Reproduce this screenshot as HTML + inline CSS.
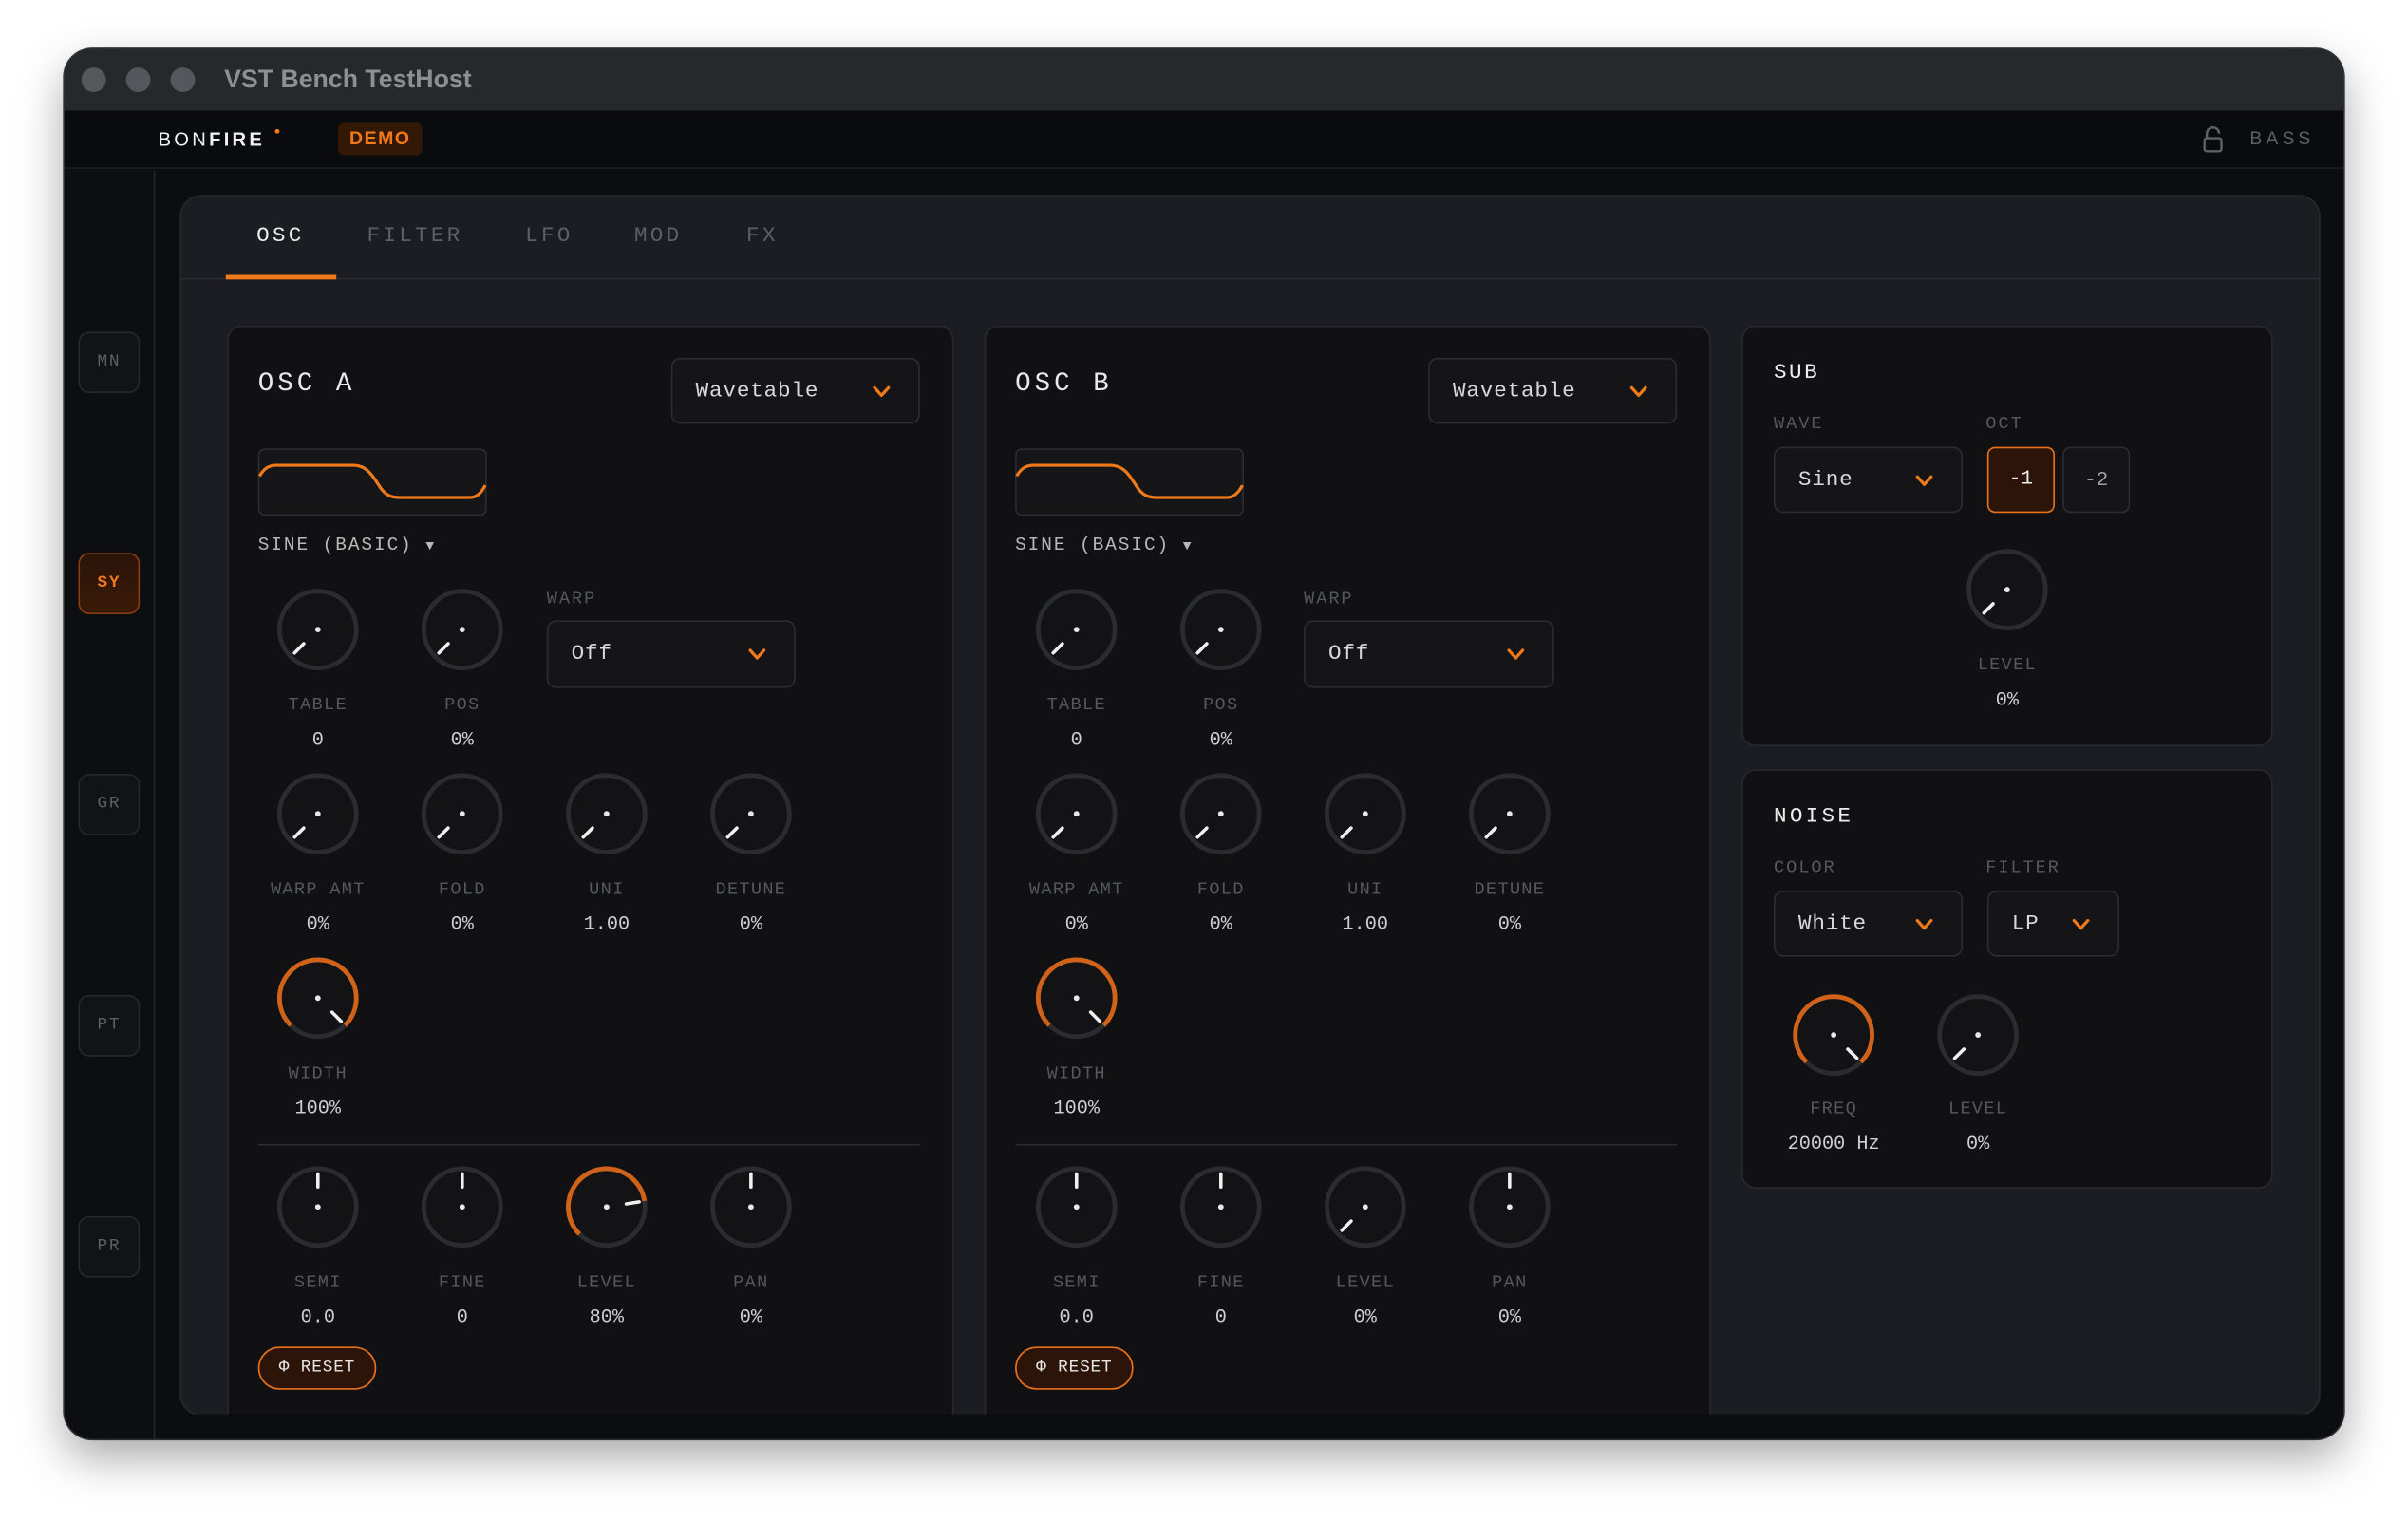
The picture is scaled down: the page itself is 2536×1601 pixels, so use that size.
<!DOCTYPE html>
<html><head><meta charset="utf-8"><style>
*{box-sizing:border-box;margin:0;padding:0}
body{width:2536px;height:1600px;overflow:hidden;background:#fff}
#w{position:absolute;left:0;top:0;width:1568px;height:990px;transform:scale(1.61735);transform-origin:0 0;font-family:"Liberation Mono",monospace}
.a{position:absolute;white-space:nowrap}
.win{left:42px;top:32px;width:1484px;height:905px;border-radius:18px;overflow:hidden;background:#0c0d10;box-shadow:0 12px 30px rgba(0,0,0,.35),0 0 0 1px #3a3d41}
.tb{left:0;top:0;width:1484px;height:40px;background:#25292c}
.tl{width:16px;height:16px;border-radius:50%;background:#54585c;top:12px}
.hd{left:0;top:40px;width:1484px;height:38px;background:#0a0b0e;border-bottom:1px solid #1d1f23}
.sb{left:0;top:79px;width:59px;height:826px;background:#0d0e11;border-right:1px solid #24262a}
.sbt{left:9px;width:40px;height:40px;border:1px solid #26282c;border-radius:7px;background:#121317;color:#5d6065;font-size:11px;text-align:center;line-height:38px;letter-spacing:1px}
.panel{left:75px;top:95px;width:1394px;height:795px;background:#1b1d22;border:1px solid #26282d;border-radius:14px}
.tab{top:18px;font-size:14px;letter-spacing:2px;color:#5c6066}
.card{background:#111113;border:1px solid #27292d;border-radius:9px}
.ct{font-size:17px;letter-spacing:2.5px;color:#e8e8e8}
.dd{border:1px solid #2b2d31;border-radius:6px;background:#151517;color:#d8d8d8;font-size:14px;letter-spacing:.5px}
.dd span{position:absolute;left:15px;top:50%;transform:translateY(-50%)}
.dd svg{position:absolute;right:18px;top:50%;margin-top:-5px}
.lbl{font-size:11.5px;letter-spacing:.8px;color:#55585d;width:100px;text-align:center}
.val{font-size:12.5px;color:#cfcfcf;width:100px;text-align:center}
.sl{font-size:11.5px;letter-spacing:1.2px;color:#55585d}
.k{position:absolute;width:56px;height:56px}
.rst{border:1.5px solid #e8711c;border-radius:15px;background:#2c1508;color:#e6e6e6;font-size:11px;letter-spacing:.5px;width:77px;height:28px;line-height:25px;text-align:center}
</style></head><body>
<svg width="0" height="0" style="position:absolute">
<defs>
<symbol id="k0" viewBox="0 0 56 56"><circle cx="28" cy="28" r="25" fill="#131315" stroke="#2b2c30" stroke-width="3"/><line x1="18.8" y1="37.2" x2="12.8" y2="43.2" stroke="#f0f0f0" stroke-width="2.2" stroke-linecap="round"/><circle cx="28" cy="28" r="1.8" fill="#e8e8e8"/></symbol>
<symbol id="kc" viewBox="0 0 56 56"><circle cx="28" cy="28" r="25" fill="#131315" stroke="#2b2c30" stroke-width="3"/><line x1="28" y1="15" x2="28" y2="6.5" stroke="#f0f0f0" stroke-width="2.2" stroke-linecap="round"/><circle cx="28" cy="28" r="1.8" fill="#e8e8e8"/></symbol>
<symbol id="kw" viewBox="0 0 56 56"><circle cx="28" cy="28" r="25" fill="#131315" stroke="#2b2c30" stroke-width="3"/><path d="M10.3 45.7 A25 25 0 1 1 45.7 45.7" fill="none" stroke="#d0621a" stroke-width="3"/><line x1="37.2" y1="37.2" x2="43.2" y2="43.2" stroke="#f0f0f0" stroke-width="2.2" stroke-linecap="round"/><circle cx="28" cy="28" r="1.8" fill="#e8e8e8"/></symbol>
<symbol id="kl" viewBox="0 0 56 56"><circle cx="28" cy="28" r="25" fill="#131315" stroke="#2b2c30" stroke-width="3"/><path d="M10.3 45.7 A25 25 0 1 1 52.7 24.1" fill="none" stroke="#d0621a" stroke-width="3"/><line x1="40.8" y1="26" x2="49.2" y2="24.7" stroke="#f0f0f0" stroke-width="2.2" stroke-linecap="round"/><circle cx="28" cy="28" r="1.8" fill="#e8e8e8"/></symbol>
<symbol id="chev" viewBox="0 0 12 10"><polyline points="1.5,2.5 6,7.5 10.5,2.5" fill="none" stroke="#f07a1a" stroke-width="2" stroke-linecap="round" stroke-linejoin="round"/></symbol>
</defs></svg>
<div id="w">
<div class="a win">
 <div class="a tb">
  <div class="a tl" style="left:11px"></div><div class="a tl" style="left:40px"></div><div class="a tl" style="left:69px"></div>
  <div class="a" style="left:104px;top:11px;font-family:'Liberation Sans',sans-serif;font-weight:bold;font-size:16.5px;color:#8b9094">VST Bench TestHost</div>
 </div>
 <div class="a hd">
  <div class="a" style="left:61px;top:12px;font-family:'Liberation Sans',sans-serif;font-size:12.5px;letter-spacing:2px;color:#f2f2f2">BON<b>FIRE</b></div>
  <div class="a" style="left:137px;top:12px;width:3px;height:3px;border-radius:50%;background:#f07a1a"></div>
  <div class="a" style="left:178px;top:8px;width:55px;height:21px;border-radius:4px;background:#341806;color:#f07a1a;font-family:'Liberation Sans',sans-serif;font-weight:bold;font-size:12px;letter-spacing:1px;text-align:center;line-height:21px">DEMO</div>
  <svg class="a" style="left:1392px;top:10px" width="14" height="18" viewBox="0 0 14 18"><path d="M3 8 V5 A4 4 0 0 1 11 5" fill="none" stroke="#5d6065" stroke-width="1.5"/><rect x="1.5" y="8" width="11" height="8.5" rx="1.5" fill="none" stroke="#5d6065" stroke-width="1.5"/></svg>
  <div class="a" style="left:1423px;top:11px;font-family:'Liberation Sans',sans-serif;font-size:12px;letter-spacing:2.5px;color:#5d6065">BASS</div>
 </div>
 <div class="a sb">
  <div class="a sbt" style="top:105px">MN</div>
  <div class="a sbt" style="top:249px;border-color:#8a3c10;background:linear-gradient(#2a1408,#3a1a08);color:#f07a1a;font-weight:bold">SY</div>
  <div class="a sbt" style="top:393px">GR</div>
  <div class="a sbt" style="top:537px">PT</div>
  <div class="a sbt" style="top:681px">PR</div>
 </div>
 <div class="a panel">
  <div class="a tab" style="left:49px;color:#ececec">OSC</div>
  <div class="a tab" style="left:121px">FILTER</div>
  <div class="a tab" style="left:224px">LFO</div>
  <div class="a tab" style="left:295px">MOD</div>
  <div class="a tab" style="left:368px">FX</div>
  <div class="a" style="left:0;top:53px;width:1392px;height:1px;background:#2a2c31"></div>
  <div class="a" style="left:29px;top:51px;width:72px;height:3px;background:#f07a1a"></div>
 </div>
</div>

<div class="a card" style="left:148px;top:212px;width:473px;height:720px"></div>
<div class="a card" style="left:641px;top:212px;width:473px;height:720px"></div>
<div class="a" style="left:117px;top:921px;width:1393px;height:16px;background:#0c0d10"></div>

<!-- OSC A -->
<div class="a ct" style="left:168px;top:241px">OSC A</div>
<div class="a dd" style="left:437px;top:233px;width:162px;height:43px"><span>Wavetable</span><svg width="12" height="10"><use href="#chev"/></svg></div>
<svg class="a" style="left:168px;top:292px" width="149" height="44" viewBox="0 0 149 44"><rect x=".5" y=".5" width="148" height="43" rx="4" fill="#161618" stroke="#2c2e33"/><path d="M1 18 C4 13 7 11 12 11 L62 11 C68 11 72 14 76 20 L80 26 C83 30 86 32 92 32 L138 32 C143 32 146 28 148 24" fill="none" stroke="#f07a1a" stroke-width="2"/></svg>
<div class="a" style="left:168px;top:348px;font-size:12px;letter-spacing:1.2px;color:#b8b8b8">SINE (BASIC) <span style="font-size:9px">▼</span></div>
<svg class="k" style="left:179px;top:382px"><use href="#k0"/></svg>
<svg class="k" style="left:273px;top:382px"><use href="#k0"/></svg>
<div class="a lbl" style="left:157px;top:453px">TABLE</div><div class="a val" style="left:157px;top:475px">0</div>
<div class="a lbl" style="left:251px;top:453px">POS</div><div class="a val" style="left:251px;top:475px">0%</div>
<div class="a sl" style="left:356px;top:384px">WARP</div>
<div class="a dd" style="left:356px;top:404px;width:162px;height:44px"><span>Off</span><svg width="12" height="10"><use href="#chev"/></svg></div>
<svg class="k" style="left:179px;top:502px"><use href="#k0"/></svg>
<svg class="k" style="left:273px;top:502px"><use href="#k0"/></svg>
<svg class="k" style="left:367px;top:502px"><use href="#k0"/></svg>
<svg class="k" style="left:461px;top:502px"><use href="#k0"/></svg>
<div class="a lbl" style="left:157px;top:573px">WARP AMT</div><div class="a val" style="left:157px;top:595px">0%</div>
<div class="a lbl" style="left:251px;top:573px">FOLD</div><div class="a val" style="left:251px;top:595px">0%</div>
<div class="a lbl" style="left:345px;top:573px">UNI</div><div class="a val" style="left:345px;top:595px">1.00</div>
<div class="a lbl" style="left:439px;top:573px">DETUNE</div><div class="a val" style="left:439px;top:595px">0%</div>
<svg class="k" style="left:179px;top:622px"><use href="#kw"/></svg>
<div class="a lbl" style="left:157px;top:693px">WIDTH</div><div class="a val" style="left:157px;top:715px">100%</div>
<div class="a" style="left:168px;top:745px;width:431px;height:1px;background:#2a2c30"></div>
<svg class="k" style="left:179px;top:758px"><use href="#kc"/></svg>
<svg class="k" style="left:273px;top:758px"><use href="#kc"/></svg>
<svg class="k" style="left:367px;top:758px"><use href="#kl"/></svg>
<svg class="k" style="left:461px;top:758px"><use href="#kc"/></svg>
<div class="a lbl" style="left:157px;top:829px">SEMI</div><div class="a val" style="left:157px;top:851px">0.0</div>
<div class="a lbl" style="left:251px;top:829px">FINE</div><div class="a val" style="left:251px;top:851px">0</div>
<div class="a lbl" style="left:345px;top:829px">LEVEL</div><div class="a val" style="left:345px;top:851px">80%</div>
<div class="a lbl" style="left:439px;top:829px">PAN</div><div class="a val" style="left:439px;top:851px">0%</div>
<div class="a rst" style="left:168px;top:877px;line-height:27px">Φ RESET</div>

<!-- OSC B -->
<div class="a ct" style="left:661px;top:241px">OSC B</div>
<div class="a dd" style="left:930px;top:233px;width:162px;height:43px"><span>Wavetable</span><svg width="12" height="10"><use href="#chev"/></svg></div>
<svg class="a" style="left:661px;top:292px" width="149" height="44" viewBox="0 0 149 44"><rect x=".5" y=".5" width="148" height="43" rx="4" fill="#161618" stroke="#2c2e33"/><path d="M1 18 C4 13 7 11 12 11 L62 11 C68 11 72 14 76 20 L80 26 C83 30 86 32 92 32 L138 32 C143 32 146 28 148 24" fill="none" stroke="#f07a1a" stroke-width="2"/></svg>
<div class="a" style="left:661px;top:348px;font-size:12px;letter-spacing:1.2px;color:#b8b8b8">SINE (BASIC) <span style="font-size:9px">▼</span></div>
<svg class="k" style="left:673px;top:382px"><use href="#k0"/></svg>
<svg class="k" style="left:767px;top:382px"><use href="#k0"/></svg>
<div class="a lbl" style="left:651px;top:453px">TABLE</div><div class="a val" style="left:651px;top:475px">0</div>
<div class="a lbl" style="left:745px;top:453px">POS</div><div class="a val" style="left:745px;top:475px">0%</div>
<div class="a sl" style="left:849px;top:384px">WARP</div>
<div class="a dd" style="left:849px;top:404px;width:163px;height:44px"><span>Off</span><svg width="12" height="10"><use href="#chev"/></svg></div>
<svg class="k" style="left:673px;top:502px"><use href="#k0"/></svg>
<svg class="k" style="left:767px;top:502px"><use href="#k0"/></svg>
<svg class="k" style="left:861px;top:502px"><use href="#k0"/></svg>
<svg class="k" style="left:955px;top:502px"><use href="#k0"/></svg>
<div class="a lbl" style="left:651px;top:573px">WARP AMT</div><div class="a val" style="left:651px;top:595px">0%</div>
<div class="a lbl" style="left:745px;top:573px">FOLD</div><div class="a val" style="left:745px;top:595px">0%</div>
<div class="a lbl" style="left:839px;top:573px">UNI</div><div class="a val" style="left:839px;top:595px">1.00</div>
<div class="a lbl" style="left:933px;top:573px">DETUNE</div><div class="a val" style="left:933px;top:595px">0%</div>
<svg class="k" style="left:673px;top:622px"><use href="#kw"/></svg>
<div class="a lbl" style="left:651px;top:693px">WIDTH</div><div class="a val" style="left:651px;top:715px">100%</div>
<div class="a" style="left:661px;top:745px;width:431px;height:1px;background:#2a2c30"></div>
<svg class="k" style="left:673px;top:758px"><use href="#kc"/></svg>
<svg class="k" style="left:767px;top:758px"><use href="#kc"/></svg>
<svg class="k" style="left:861px;top:758px"><use href="#k0"/></svg>
<svg class="k" style="left:955px;top:758px"><use href="#kc"/></svg>
<div class="a lbl" style="left:651px;top:829px">SEMI</div><div class="a val" style="left:651px;top:851px">0.0</div>
<div class="a lbl" style="left:745px;top:829px">FINE</div><div class="a val" style="left:745px;top:851px">0</div>
<div class="a lbl" style="left:839px;top:829px">LEVEL</div><div class="a val" style="left:839px;top:851px">0%</div>
<div class="a lbl" style="left:933px;top:829px">PAN</div><div class="a val" style="left:933px;top:851px">0%</div>
<div class="a rst" style="left:661px;top:877px;line-height:27px">Φ RESET</div>

<!-- SUB -->
<div class="a card" style="left:1134px;top:212px;width:346px;height:274px"></div>
<div class="a" style="left:1155px;top:235px;font-size:14px;letter-spacing:1.5px;color:#ececec">SUB</div>
<div class="a sl" style="left:1155px;top:270px">WAVE</div>
<div class="a sl" style="left:1293px;top:270px">OCT</div>
<div class="a dd" style="left:1155px;top:291px;width:123px;height:43px"><span>Sine</span><svg width="12" height="10"><use href="#chev"/></svg></div>
<div class="a" style="left:1294px;top:291px;width:44px;height:43px;border:1.5px solid #e8711c;border-radius:5px;background:#2c1508;color:#f0f0f0;font-size:13px;text-align:center;line-height:40px">-1</div>
<div class="a" style="left:1343px;top:291px;width:44px;height:43px;border:1px solid #2b2d31;border-radius:5px;background:#151517;color:#a0a0a0;font-size:13px;text-align:center;line-height:41px">-2</div>
<svg class="k" style="left:1279px;top:356px"><use href="#k0"/></svg>
<div class="a lbl" style="left:1257px;top:427px">LEVEL</div><div class="a val" style="left:1257px;top:449px">0%</div>

<!-- NOISE -->
<div class="a card" style="left:1134px;top:501px;width:346px;height:273px"></div>
<div class="a" style="left:1155px;top:524px;font-size:14px;letter-spacing:2px;color:#ececec">NOISE</div>
<div class="a sl" style="left:1155px;top:559px">COLOR</div>
<div class="a sl" style="left:1293px;top:559px">FILTER</div>
<div class="a dd" style="left:1155px;top:580px;width:123px;height:43px"><span>White</span><svg width="12" height="10"><use href="#chev"/></svg></div>
<div class="a dd" style="left:1294px;top:580px;width:86px;height:43px"><span>LP</span><svg width="12" height="10"><use href="#chev"/></svg></div>
<svg class="k" style="left:1166px;top:646px"><use href="#kw"/></svg>
<svg class="k" style="left:1260px;top:646px"><use href="#k0"/></svg>
<div class="a lbl" style="left:1144px;top:716px">FREQ</div><div class="a val" style="left:1144px;top:738px">20000 Hz</div>
<div class="a lbl" style="left:1238px;top:716px">LEVEL</div><div class="a val" style="left:1238px;top:738px">0%</div>
</div>
</body></html>
